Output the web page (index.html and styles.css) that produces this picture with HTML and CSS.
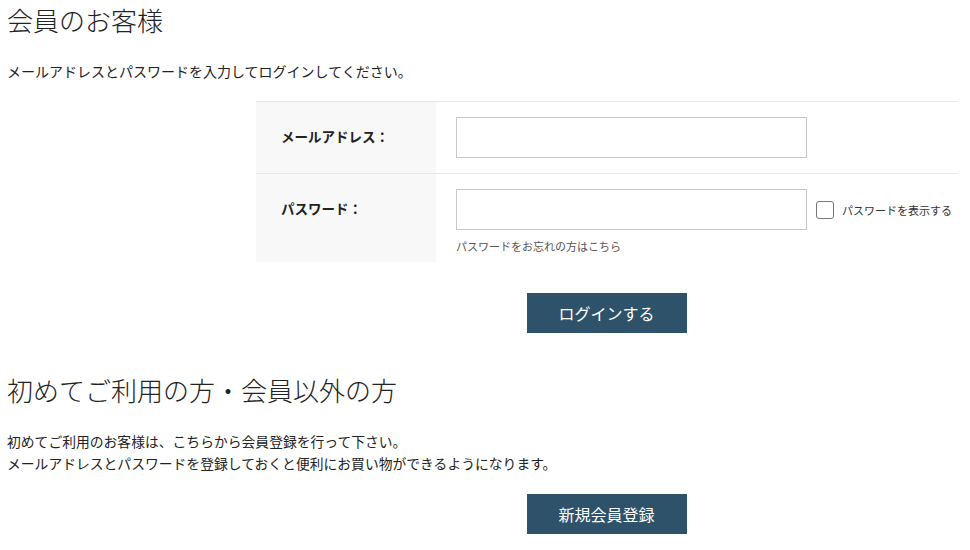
FILE: index.html
```html
<!DOCTYPE html>
<html lang="ja">
<head>
    <meta charset="UTF-8">
    <title>ログイン</title>
    <link rel="stylesheet" href="styles.css">
</head>
<body>
    <div class="container">
        <h1>会員のお客様</h1>
        <p class="lead">メールアドレスとパスワードを入力してログインしてください。</p>

        <div class="form-area">
            <table class="login-table">
                <tr>
                    <th>メールアドレス：</th>
                    <td>
                        <input type="text" class="field">
                    </td>
                </tr>
                <tr>
                    <th>パスワード：</th>
                    <td>
                        <div class="pw-row">
                            <input type="password" class="field">
                            <label class="show-pw"><span class="check"></span>パスワードを表示する</label>
                        </div>
                        <a href="#" class="forgot">パスワードをお忘れの方はこちら</a>
                    </td>
                </tr>
            </table>
            <div class="btn-row">
                <button class="btn">ログインする</button>
            </div>
        </div>

        <h2>初めてご利用の方・会員以外の方</h2>
        <p class="lead2">初めてご利用のお客様は、こちらから会員登録を行って下さい。<br>メールアドレスとパスワードを登録しておくと便利にお買い物ができるようになります。</p>

        <div class="form-area">
            <div class="btn-row btn-row-last">
                <button class="btn">新規会員登録</button>
            </div>
        </div>
    </div>
</body>
</html>
```

FILE: styles.css
```css
* {
    margin: 0;
    padding: 0;
    box-sizing: border-box;
}

body {
    font-family: "Noto Sans CJK JP", "Noto Sans", sans-serif;
    color: #222;
    background: white;
}

.container {
    padding: 0 13px 0 7px;
}

h1, h2 {
    font-size: 26px;
    font-weight: 300;
    line-height: 40px;
    color: #222;
}

.lead {
    font-size: 14px;
    line-height: 22px;
    margin-top: 20px;
}

.form-area {
    margin-left: 249px;
    width: 701px;
}

.login-table {
    width: 100%;
    border-collapse: collapse;
    margin-top: 19px;
    border-top: 1px solid #e6e6e6;
}

.login-table tr + tr {
    border-top: 1px solid #e6e6e6;
}

.login-table th {
    width: 180px;
    background: #f8f8f8;
    text-align: left;
    font-size: 13.5px;
    font-weight: bold;
    padding: 0 0 0 25px;
    vertical-align: middle;
    color: #222;
}

.login-table tr:first-child th {
    height: 72px;
    padding-bottom: 3px;
}

.login-table tr:nth-child(2) th {
    vertical-align: top;
    padding-top: 24px;
}

.login-table td {
    padding: 15px 0 15px 20px;
    vertical-align: top;
}

.login-table tr:nth-child(2) td {
    padding-bottom: 8px;
}

.field {
    display: block;
    width: 351px;
    height: 41px;
    border: 1px solid #c8c8c8;
    background: white;
    font-size: 14px;
    padding: 0 10px;
}

.pw-row {
    display: flex;
    align-items: center;
}

.show-pw {
    display: flex;
    align-items: center;
    font-size: 11px;
    color: #333;
    margin-left: 9px;
    white-space: nowrap;
}

.check {
    width: 18px;
    height: 18px;
    border: 1px solid #777;
    border-radius: 3px;
    background: white;
    margin-right: 8px;
}

.forgot {
    display: block;
    font-size: 11px;
    color: #555;
    text-decoration: none;
    margin-top: 8px;
    line-height: 16px;
}

.btn-row {
    display: flex;
    justify-content: center;
    margin-top: 31px;
}

.btn-row-last {
    margin-top: 20px;
}

.btn {
    width: 160px;
    height: 40px;
    background: #2e5269;
    color: white;
    border: none;
    font-family: inherit;
    font-size: 16px;
    cursor: pointer;
}

h2 {
    margin-top: 37px;
}

.lead2 {
    font-size: 13.8px;
    line-height: 22px;
    margin-top: 20px;
}
```
